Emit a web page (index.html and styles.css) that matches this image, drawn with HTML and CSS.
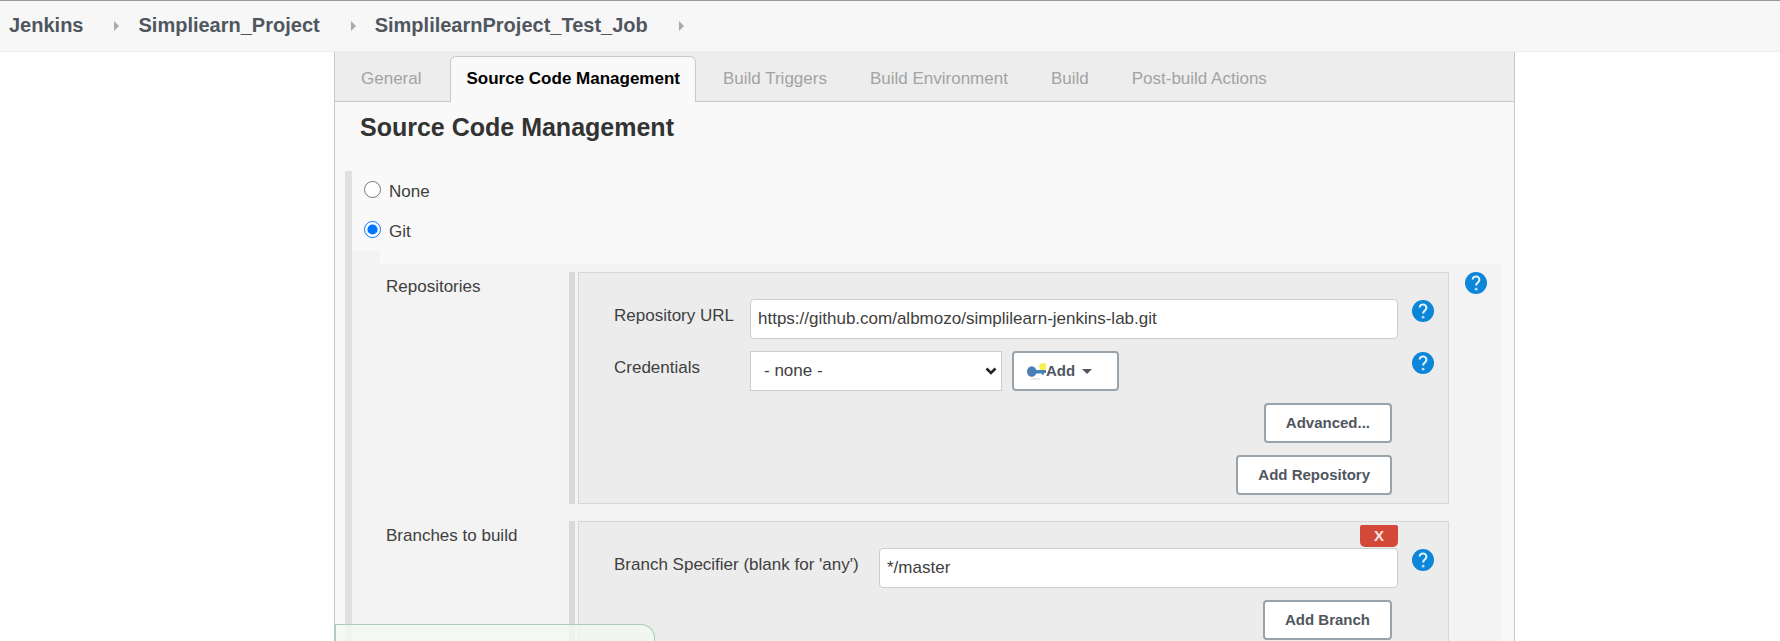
FILE: index.html
```html
<!DOCTYPE html>
<html lang="en">
<head>
<meta charset="utf-8">
<title>SimplilearnProject_Test_Job Config [Jenkins]</title>
<link rel="stylesheet" href="styles.css">
</head>
<body>
<svg class="defs" aria-hidden="true">
  <symbol id="help" viewBox="0 0 22 22">
    <circle cx="11" cy="11" r="11" fill="#0b86d8"/>
    <path d="M7.600 7.600a3.400 3.200 0 1 1 5.800 2.300c-1.400 1.300-2.300 1.700-2.300 3.700" fill="none" stroke="#e6f4fc" stroke-width="2"/>
    <circle cx="11.100" cy="17.200" r="1.400" fill="#b5dcf5"/>
  </symbol>
</svg>
<nav class="breadcrumbs" aria-label="Breadcrumb">
  <a href="#">Jenkins</a><span class="arrow"></span>
  <a href="#">Simpliearn_Project</a><span class="arrow"></span>
  <a href="#">SimplilearnProject_Test_Job</a><span class="arrow"></span>
</nav>
<main class="panel">
  <nav class="tabs" aria-label="Configuration sections">
    <a class="tab" href="#">General</a>
    <a class="tab active" href="#">Source Code Management</a>
    <a class="tab" href="#">Build Triggers</a>
    <a class="tab" href="#">Build Environment</a>
    <a class="tab" href="#">Build</a>
    <a class="tab" href="#">Post-build Actions</a>
  </nav>
  <h1 class="title">Source Code Management</h1>
  <form class="scm">
    <div class="choices">
      <div class="choice"><input type="radio" name="scm" id="scm-none"><label for="scm-none">None</label></div>
      <div class="choice"><input type="radio" name="scm" id="scm-git" checked><label for="scm-git">Git</label></div>
    </div>
    <div class="step"></div>
    <div class="git">
      <section class="group">
        <h2 class="group-name">Repositories</h2>
        <div class="bar"></div>
        <div class="box">
          <div class="row">
            <label for="url">Repository URL</label>
            <input class="text" type="text" id="url" value="https://github.com/albmozo/simplilearn-jenkins-lab.git">
            <a class="help" href="#" aria-label="Help"><svg><use href="#help"/></svg></a>
          </div>
          <div class="row">
            <label for="cred">Credentials</label>
            <div class="controls">
              <span class="select-wrap">
                <select id="cred"><option>- none -</option></select>
                <svg class="chevron" viewBox="0 0 12 8" aria-hidden="true"><path d="M1.500 1.500 6 6l4.500-4.500" fill="none" stroke="#222" stroke-width="2.500"/></svg>
              </span>
              <button class="btn add" type="button">
                <svg class="key" viewBox="0 0 18 18" aria-hidden="true">
                  <ellipse cx="8" cy="16" rx="5" ry="1" fill="#eee9e6"/>
                  <circle cx="15" cy="4.500" r="3.500" fill="#f6ee55"/>
                  <path d="M7 7.500h11v3h-2v1.500h-2v-1H7z" fill="#4480b8"/>
                  <ellipse cx="4.500" cy="9" rx="4.500" ry="5" fill="#4c7db5"/>
                </svg>Add<span class="caret"></span>
              </button>
            </div>
            <a class="help" href="#" aria-label="Help"><svg><use href="#help"/></svg></a>
          </div>
          <div class="actions"><button class="btn" type="button">Advanced...</button></div>
          <div class="actions"><button class="btn" type="button">Add Repository</button></div>
        </div>
        <a class="help" href="#" aria-label="Help"><svg><use href="#help"/></svg></a>
      </section>
      <section class="group">
        <h2 class="group-name">Branches to build</h2>
        <div class="bar"></div>
        <div class="box">
          <button class="delete" type="button" aria-label="Delete branch">X</button>
          <div class="row wide">
            <label for="branch">Branch Specifier (blank for 'any')</label>
            <input class="text" type="text" id="branch" value="*/master">
            <a class="help" href="#" aria-label="Help"><svg><use href="#help"/></svg></a>
          </div>
          <div class="actions"><button class="btn" type="button">Add Branch</button></div>
        </div>
      </section>
    </div>
  </form>
  <div class="save-bar"></div>
</main>
</body>
</html>
```
FILE: styles.css
```css
* { box-sizing: border-box; }

body {
  margin: 0;
  height: 100vh;
  overflow: hidden;
  display: flex;
  flex-direction: column;
  background: #fff;
  color: #404040;
  font: 17px/20px "Liberation Sans", Arial, sans-serif;
}

a { color: inherit; text-decoration: none; }
input, select, button { font: inherit; color: inherit; }
.defs { display: none; }

.breadcrumbs {
  flex: none;
  display: flex;
  align-items: center;
  height: 52px;
  padding: 0 9px 2px;
  border-top: 1px solid #999;
  border-bottom: 1px solid #eee;
  background: #f7f7f7;
  color: #50565e;
  font-size: 20px;
  font-weight: bold;
}

.arrow {
  margin: 2px 19px 0 31px;
  border-left: 5px solid #aaa;
  border-top: 5px solid transparent;
  border-bottom: 5px solid transparent;
}

.panel {
  position: relative;
  flex: 1;
  min-height: 0;
  overflow: hidden;
  margin: 0 265px 0 334px;
  border: solid #c8c8c8;
  border-width: 0 1px;
  background: #f9f9f9;
}

.tabs {
  display: flex;
  align-items: flex-end;
  height: 50px;
  padding-left: 12px;
  border-bottom: 1px solid #c8c8c8;
  background: #ededed;
  color: #a3a3a3;
}

.tab {
  height: 46px;
  margin-bottom: -1px;
  padding: 12px 13px;
  border: 1px solid transparent;
  border-bottom: 0;
  border-radius: 6px 6px 0 0;
  white-space: nowrap;
}

.tab.active {
  margin-right: 13px;
  margin-left: 15px;
  padding: 12px 15px;
  border-color: #c8c8c8;
  background: #f9f9f9;
  color: #000;
  font-weight: bold;
}

.tab:nth-child(n+4) { margin-left: 15px; }

.title {
  margin: 9px 0 0 25px;
  color: #333;
  font-size: 25px;
  line-height: 32px;
}

.scm {
  margin: 28px 13px 0 10px;
  border-left: 7px solid #e0e0e0;
}

.choices {
  display: grid;
  gap: 19px;
  padding: 10px 0 9px 12px;
}

.choice { display: flex; align-items: center; gap: 8px; }

.choice input {
  width: 17px;
  height: 17px;
  margin: 0 0 4px;
}

.step { width: 28px; height: 13px; background: #f3f3f3; }

.git {
  display: grid;
  gap: 17px;
  height: 600px;
  align-content: start;
  padding: 8px 0;
  background: #f3f3f3;
}

.group {
  display: grid;
  grid-template-columns: 180px 6px minmax(0, 1fr) 22px;
  column-gap: 3px;
  padding: 0 14px 0 34px;
}

.group-name {
  margin: 5px 0 0;
  font-size: inherit;
  font-weight: normal;
}

.bar { background: #d9d9d9; }

.box {
  display: grid;
  align-content: start;
  gap: 12px;
  min-height: 232px;
  margin-right: 13px;
  padding: 26px 16px 8px 35px;
  border: 1px solid #d6d6d6;
  background: #ececec;
  position: relative;
}

.row {
  display: grid;
  grid-template-columns: 124px minmax(0, 1fr) 22px;
  column-gap: 12px;
}

.row.wide { grid-template-columns: 253px minmax(0, 1fr) 22px; }
.row > label { padding-top: 7px; white-space: nowrap; }
.row .help { margin: 1px 0 0 2px; }

.help, .help svg { display: block; width: 22px; height: 22px; }

.text, select {
  width: 100%;
  height: 40px;
  border: 1px solid #ccc;
  background: #fff;
}

.text { padding: 0 7px; border-radius: 4px; }

.controls { display: flex; gap: 10px; }
.select-wrap { position: relative; width: 252px; }
select { appearance: none; padding: 0 13px; border-radius: 0; }

.chevron {
  position: absolute;
  right: 5px;
  top: 16px;
  width: 12px;
  height: 8px;
  pointer-events: none;
}

.btn {
  display: flex;
  align-items: center;
  height: 40px;
  padding: 0 20px;
  border: 2px solid #98a3ab;
  border-radius: 4px;
  background: #fff;
  color: #50565e;
  font-size: 15px;
  font-weight: bold;
}

.btn.add { width: 107px; padding: 0 13px; }
.key { flex: none; width: 19px; height: 19px; }

.caret {
  margin-left: 7px;
  border-top: 5px solid #50565e;
  border-left: 5px solid transparent;
  border-right: 5px solid transparent;
}

.actions {
  display: flex;
  justify-content: flex-end;
  padding-right: 40px;
}

.delete {
  position: absolute;
  top: 3px;
  right: 50px;
  width: 38px;
  height: 22px;
  padding: 0;
  border: 0;
  border-radius: 2px 2px 5px 5px;
  background: #d24939;
  color: #f8e5e2;
  font-size: 15px;
  font-weight: bold;
}

.save-bar {
  position: absolute;
  left: 0;
  bottom: 0;
  width: 320px;
  height: 17px;
  border: 1px solid #a9cdbc;
  border-bottom: 0;
  border-top-right-radius: 14px;
  background: rgba(243, 250, 241, 0.8);
}
```
